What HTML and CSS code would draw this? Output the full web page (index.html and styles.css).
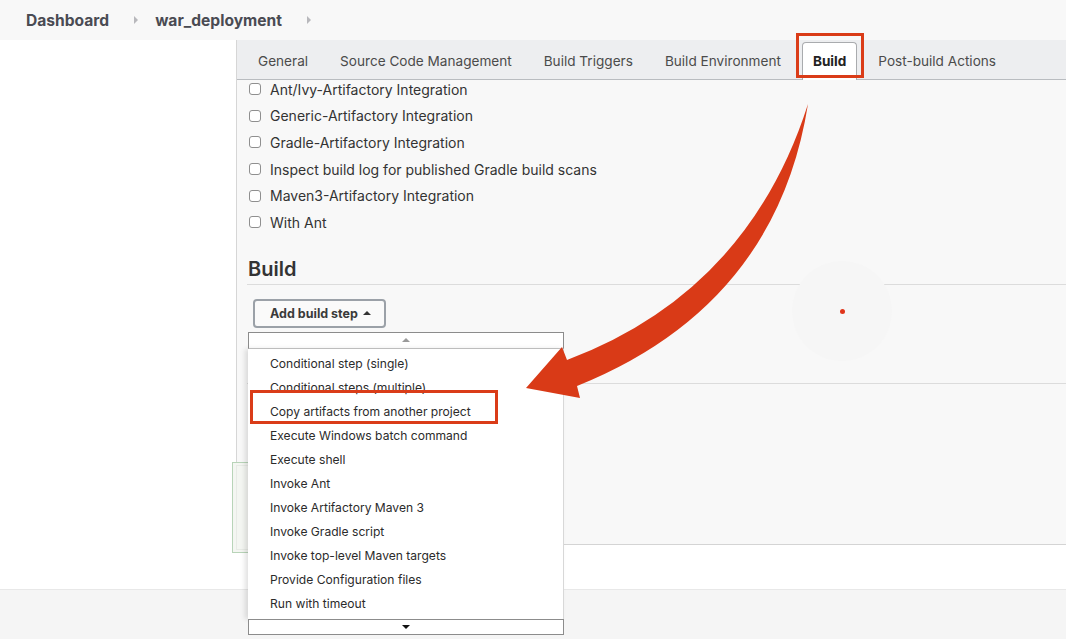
FILE: index.html
```html
<!DOCTYPE html>
<html lang="en">
<head>
<meta charset="utf-8">
<title>war_deployment Config</title>
<link rel="stylesheet" href="styles.css">
</head>
<body>
<header class="crumbs">
  <span class="crumb">Dashboard</span><span class="sep"></span>
  <span class="crumb">war_deployment</span><span class="sep"></span>
</header>
<div class="layout">
  <aside class="side"></aside>
  <main class="panel">
    <nav class="tabs">
      <span class="tab">General</span>
      <span class="tab">Source Code Management</span>
      <span class="tab">Build Triggers</span>
      <span class="tab">Build Environment</span>
      <span class="tab active">Build</span>
      <span class="tab">Post-build Actions</span>
    </nav>
    <div class="content">
      <ul class="checks">
        <li><span class="box"></span>Ant/Ivy-Artifactory Integration</li>
        <li><span class="box"></span>Generic-Artifactory Integration</li>
        <li><span class="box"></span>Gradle-Artifactory Integration</li>
        <li><span class="box"></span>Inspect build log for published Gradle build scans</li>
        <li><span class="box"></span>Maven3-Artifactory Integration</li>
        <li><span class="box"></span>With Ant</li>
      </ul>
      <section class="build">
        <h2>Build</h2>
        <div class="step-area">
          <button class="add-btn">Add build step <span class="caret-up"></span></button>
          <div class="dropdown">
            <div class="scroll top"><span class="tri-up"></span></div>
            <ul class="menu">
              <li>Conditional step (single)</li>
              <li>Conditional steps (multiple)</li>
              <li>Copy artifacts from another project</li>
              <li>Execute Windows batch command</li>
              <li>Execute shell</li>
              <li>Invoke Ant</li>
              <li>Invoke Artifactory Maven 3</li>
              <li>Invoke Gradle script</li>
              <li>Invoke top-level Maven targets</li>
              <li>Provide Configuration files</li>
              <li>Run with timeout</li>
            </ul>
            <div class="scroll bottom"><span class="tri-down"></span></div>
            <div class="hl-item"></div>
          </div>
        </div>
      </section>
    </div>
  </main>
</div>
<footer class="footer"></footer>

<div class="notice"><div class="notice-inner"></div></div>
<div class="spinner"><span class="dot"></span></div>
<div class="hl-tab"></div>
<svg class="arrow" width="1066" height="639" viewBox="0 0 1066 639">
  <path d="M808 104 Q748 292 567 360 L562 347 L526 388 L580 398 L577 386 Q776 306 808 104 Z" fill="#d93a17"/>
</svg>
</body>
</html>
```

FILE: styles.css
```css
* { box-sizing: border-box; }
html, body { margin: 0; padding: 0; }
body {
  width: 1066px;
  height: 639px;
  overflow: hidden;
  position: relative;
  background: #ffffff;
  font-family: Inter, "Noto Sans", "Liberation Sans", sans-serif;
  color: #333;
}

/* breadcrumb */
.crumbs {
  height: 40px;
  background: #f8f8f8;
  display: flex;
  align-items: center;
  padding-left: 26px;
}
.crumb {
  font-size: 15.6px;
  font-weight: 700;
  color: #4a4b53;
}
.sep {
  width: 0; height: 0;
  border-left: 4px solid #b8b8bc;
  border-top: 4px solid transparent;
  border-bottom: 4px solid transparent;
  margin: 0 17px 0 25px;
}

/* layout */
.layout { display: flex; }
.side { width: 236px; flex: none; background: #fff; }
.panel {
  flex: 1;
  border-left: 1px solid #d6d6d6;
  background: #f8f8f8;
}

/* tabs */
.tabs {
  height: 40px;
  background: #edeef0;
  border-bottom: 1px solid #b9bcc0;
  display: flex;
  align-items: flex-end;
  padding-left: 5px;
}
.tab {
  height: 37px;
  line-height: 39px;
  padding: 0 11px;
  margin: 0 5px;
  font-size: 13.6px;
  color: #4b4b4b;
  white-space: nowrap;
}
.tab.active {
  background: #fff;
  border: 1px solid #a9abae;
  border-bottom: none;
  border-radius: 4px 4px 0 0;
  font-weight: 700;
  color: #222;
  margin-bottom: -1px;
  height: 38px;
  line-height: 37px;
  padding: 0 10px;
}

/* content */
.content {
  height: 469px;
  border-bottom: 1px solid #d4d4d4;
  padding-left: 10px;
}
.checks {
  list-style: none;
  margin: -4px 0 0;
  padding: 0;
}
.checks li {
  height: 26.6px;
  display: flex;
  align-items: center;
  font-size: 14px;
  color: #333;
}
.box {
  width: 12px; height: 12px;
  border: 1px solid #8f8f8f;
  border-radius: 3px;
  background: #fff;
  margin: 0 9px 0 2px;
  flex: none;
}

.build {
  border-bottom: 1px solid #dcdcdc;
  padding-bottom: 55px;
}
.build h2 {
  margin: 21px 0 0;
  font-size: 20px;
  line-height: 24px;
  font-weight: 600;
  color: #333;
  padding: 0 0 3px 1px;
  border-bottom: 1px solid #dcdcdc;
}
.step-area {
  position: relative;
  margin: 14px 0 0 6px;
  width: 133px;
}
.add-btn {
  width: 133px;
  height: 29px;
  border: 2px solid #9ba1a8;
  border-radius: 4px;
  background: #fafafa;
  font-family: inherit;
  font-size: 12.5px;
  font-weight: 700;
  color: #3a3a3a;
  display: flex;
  align-items: center;
  justify-content: center;
  gap: 5px;
  padding: 0 0 0 2px;
}
.caret-up {
  width: 0; height: 0;
  border-left: 4px solid transparent;
  border-right: 4px solid transparent;
  border-bottom: 4px solid #333;
}

/* dropdown */
.dropdown {
  position: absolute;
  top: 33px;
  left: -5px;
  width: 316px;
  z-index: 5;
}
.scroll {
  height: 17px;
  background: #fff;
  border: 1px solid #8c8c8c;
  display: flex;
  align-items: center;
  justify-content: center;
}
.tri-up {
  width: 0; height: 0;
  border-left: 4px solid transparent;
  border-right: 4px solid transparent;
  border-bottom: 4px solid #9a9a9a;
}
.tri-down {
  width: 0; height: 0;
  border-left: 4px solid transparent;
  border-right: 4px solid transparent;
  border-top: 4px solid #111;
}
.menu {
  list-style: none;
  margin: 0;
  padding: 3px 0 3px;
  background: #fff;
  border-right: 1px solid #d8d8d8;
  box-shadow: -3px 0 5px rgba(0,0,0,0.12);
}
.menu li {
  height: 24px;
  line-height: 24px;
  padding-left: 22px;
  font-size: 12.1px;
  color: #2b2b2b;
  white-space: nowrap;
}
.scroll.top { border-bottom: 1px solid #c8c8c8; }
.scroll.bottom { height: 16px; }

/* annotations */
.hl-item {
  position: absolute;
  left: 2px;
  top: 58px;
  width: 248px;
  height: 34px;
  border: 3px solid #da3c18;
}
.hl-tab {
  position: absolute;
  left: 796px;
  top: 33px;
  width: 68px;
  height: 45px;
  border: 3px solid #da3c18;
}
.arrow {
  position: absolute;
  left: 0; top: 0;
  pointer-events: none;
  z-index: 10;
}

/* notice box */
.notice {
  position: absolute;
  left: 232px;
  top: 462px;
  width: 40px;
  height: 91px;
  border: 1px solid #b8d4b8;
  background: #f4f6f2;
  padding: 2px 3px;
}
.notice-inner {
  height: 100%;
  border: 1px solid #e8ebe6;
}

/* spinner */
.spinner {
  position: absolute;
  left: 792px;
  top: 261px;
  width: 100px;
  height: 100px;
  border-radius: 50%;
  background: #f6f6f6;
  display: flex;
  align-items: center;
  justify-content: center;
}
.dot {
  width: 5px; height: 5px;
  border-radius: 50%;
  background: #e0341a;
}

/* footer */
.footer {
  position: absolute;
  left: 0; right: 0; bottom: 0;
  height: 50px;
  background: #f5f5f5;
  border-top: 1px solid #e8e8e8;
}
```
